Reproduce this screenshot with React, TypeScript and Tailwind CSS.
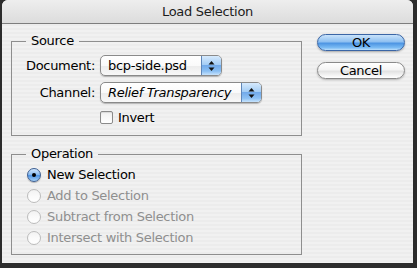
import React from "react";

const font = { fontFamily: '"DejaVu Sans", "Liberation Sans", sans-serif' };

function Arrows() {
  return (
    <svg width="7" height="12" viewBox="0 0 7 12">
      <path d="M3.5 1 L6.5 4.5 L0.5 4.5 Z" fill="#111" />
      <path d="M3.5 11 L6.5 7.5 L0.5 7.5 Z" fill="#111" />
    </svg>
  );
}

function Popup({ label, width, italic }: { label: string; width: string; italic?: boolean }) {
  return (
    <div
      className={`flex h-[21px] ${width} overflow-hidden rounded-[5px] border border-[#8a8a8a] bg-[linear-gradient(to_bottom,#ffffff_0%,#fafafa_50%,#ececec_51%,#f8f8f8_100%)] shadow-[0_1px_1px_rgba(0,0,0,0.25)]`}
    >
      <div className={`flex-1 pl-[7px] text-[13px] leading-[19px] text-black ${italic ? "italic" : ""}`}>{label}</div>
      <div className="flex w-[20px] items-center justify-center border-l border-[#5f86b8] bg-[linear-gradient(to_bottom,#d6eafd_0%,#a4cdf5_45%,#72aaea_50%,#8cc0f3_80%,#c7e3fc_100%)]">
        <Arrows />
      </div>
    </div>
  );
}

function Radio({ label, selected }: { label: string; selected?: boolean }) {
  return (
    <div className="flex h-[21px] items-center">
      {selected ? (
        <div className="ml-[15px] flex h-[14px] w-[14px] items-center justify-center rounded-full border border-[#3e5f92] bg-[linear-gradient(to_bottom,#cfe6fd_0%,#8ebdf0_45%,#4f95e4_55%,#a8d2f8_100%)] shadow-[0_1px_1px_rgba(0,0,0,0.25)]">
          <div className="h-[4px] w-[4px] rounded-full bg-black" />
        </div>
      ) : (
        <div className="ml-[15px] h-[14px] w-[14px] rounded-full border border-[#bcbcbc] bg-[linear-gradient(to_bottom,#f2f2f2_0%,#fafafa_50%,#ffffff_100%)]" />
      )}
      <span className={`ml-[6px] text-[13px] ${selected ? "text-black" : "text-[#8f8f8f]"}`}>{label}</span>
    </div>
  );
}

export default function App() {
  const stripes =
    "bg-[repeating-linear-gradient(to_bottom,#ececec_0px,#ececec_2px,#f1f1f1_2px,#f1f1f1_4px)]";
  return (
    <div className="h-[268px] w-[417px] overflow-hidden bg-[#2c2c2c] tracking-[-0.3px]" style={font}>
      <div className={`ml-[2px] flex h-[263px] w-[411px] flex-col overflow-hidden rounded-t-[6px] ${stripes}`}>
        <div className="flex h-[24px] items-center justify-center border-b border-[#7d7d7d] bg-[linear-gradient(to_bottom,#eeeeee_0%,#dcdcdc_100%)] text-[13px] text-[#1c1c1c]">
          Load Selection
        </div>
        <div className="flex">
          <div className="ml-[9px] flex w-[291px] flex-col">
            <fieldset className="mt-[9px] border border-[#8e8e8e] pb-[11px]">
              <legend className="ml-[14px] px-[5px] text-[13px] leading-[16px] text-black">Source</legend>
              <div className="mt-[6px] flex items-center">
                <div className="w-[83px] text-right text-[13px] text-black">Document:</div>
                <div className="ml-[5px]">
                  <Popup label="bcp-side.psd" width="w-[122px]" />
                </div>
              </div>
              <div className="mt-[6px] flex items-center">
                <div className="w-[83px] text-right text-[13px] text-black">Channel:</div>
                <div className="ml-[5px]">
                  <Popup label="Relief Transparency" width="w-[162px]" italic />
                </div>
              </div>
              <div className="mt-[8px] flex h-[13px] items-center pl-[88px]">
                <div className="h-[13px] w-[13px] rounded-[2px] border border-[#8a8a8a] bg-[linear-gradient(to_bottom,#f0f0f0_0%,#ffffff_100%)] shadow-[inset_0_1px_1px_rgba(0,0,0,0.1)]" />
                <span className="ml-[5px] text-[13px] text-black">Invert</span>
              </div>
            </fieldset>
            <fieldset className="mt-[10px] border border-[#8e8e8e] pb-[6px]">
              <legend className="ml-[14px] px-[5px] text-[13px] leading-[16px] text-black">Operation</legend>
              <div className="mt-[2px] flex flex-col">
                <Radio label="New Selection" selected />
                <Radio label="Add to Selection" />
                <Radio label="Subtract from Selection" />
                <Radio label="Intersect with Selection" />
              </div>
            </fieldset>
          </div>
          <div className="ml-[15px] mt-[10px] flex flex-col gap-[11px]">
            <div className="flex h-[17px] w-[88px] items-center justify-center rounded-full border border-[#3b66a6] bg-[linear-gradient(to_bottom,#c9e3fb_0%,#8fc0f1_45%,#4d95e3_55%,#7cbcf4_85%,#bfe0fb_100%)] text-[13px] text-black shadow-[0_1px_2px_rgba(0,0,0,0.3)]">
              OK
            </div>
            <div className="flex h-[17px] w-[88px] items-center justify-center rounded-full border border-[#8a8a8a] bg-[linear-gradient(to_bottom,#ffffff_0%,#f4f4f4_45%,#e2e2e2_55%,#f6f6f6_85%,#ffffff_100%)] text-[13px] text-black shadow-[0_1px_2px_rgba(0,0,0,0.25)]">
              Cancel
            </div>
          </div>
        </div>
      </div>
    </div>
  );
}
